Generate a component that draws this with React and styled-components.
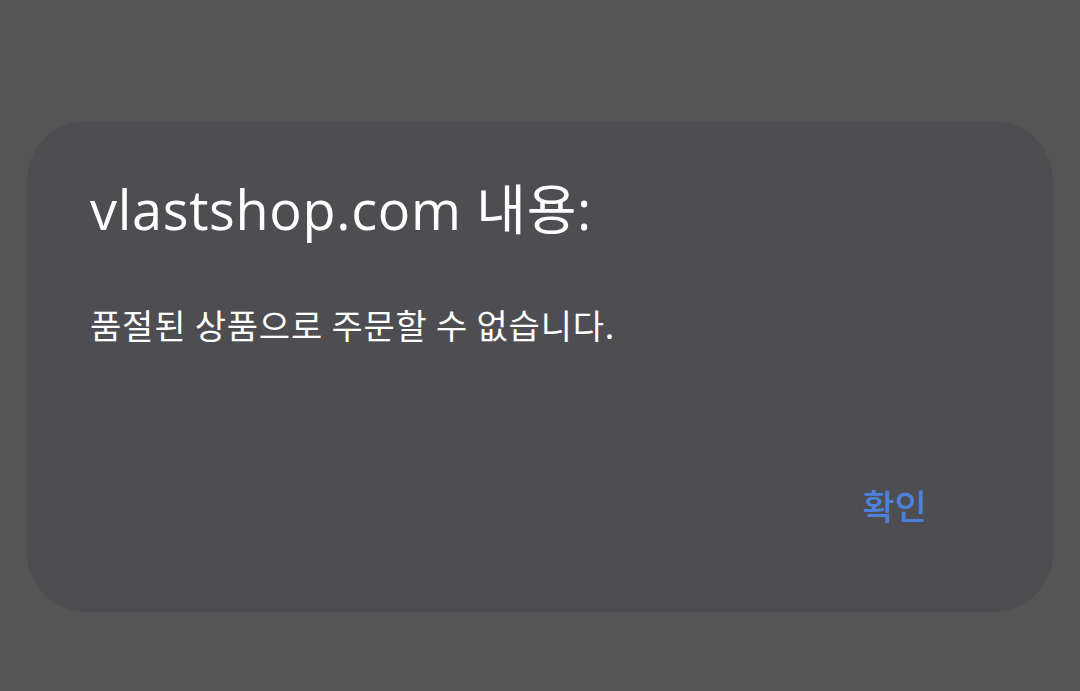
import React from 'react';
import styled, { createGlobalStyle } from 'styled-components';

const GlobalStyle = createGlobalStyle`
  html, body {
    margin: 0;
    padding: 0;
    background: #555555;
  }
  body {
    font-family: "Noto Sans", "Noto Sans CJK KR", sans-serif;
  }
`;

const Page = styled.div`
  width: 1080px;
  height: 691px;
  box-sizing: border-box;
  padding: 121px 27px 0 27px;
  background: #555555;
`;

const Dialog = styled.div`
  height: 491px;
  box-sizing: border-box;
  background: #4e4d52;
  border-radius: 60px;
  padding: 56px 126px 0 63px;
  display: flex;
  flex-direction: column;
`;

const Title = styled.h1`
  margin: 0;
  font-family: "Open Sans", "Noto Sans CJK KR", sans-serif;
  font-weight: 400;
  font-size: 54px;
  line-height: 64px;
  color: #ffffff;
  letter-spacing: 0.7px;
`;

const Message = styled.p`
  margin: 64px 0 0 0;
  font-family: "Noto Sans CJK KR", sans-serif;
  font-size: 34px;
  line-height: 40px;
  color: #ffffff;
  letter-spacing: 0.8px;
`;

const Actions = styled.div`
  margin-top: auto;
  margin-bottom: 87px;
  display: flex;
  justify-content: flex-end;
`;

const ConfirmButton = styled.button`
  background: none;
  border: none;
  padding: 0;
  font-family: "Noto Sans CJK KR", sans-serif;
  font-weight: 500;
  font-size: 35px;
  line-height: 40px;
  color: #4d82dc;
  cursor: pointer;
`;

export default function App() {
  return (
    <Page>
      <GlobalStyle />
      <Dialog>
        <Title>vlastshop.com 내용:</Title>
        <Message>품절된 상품으로 주문할 수 없습니다.</Message>
        <Actions>
          <ConfirmButton>확인</ConfirmButton>
        </Actions>
      </Dialog>
    </Page>
  );
}
